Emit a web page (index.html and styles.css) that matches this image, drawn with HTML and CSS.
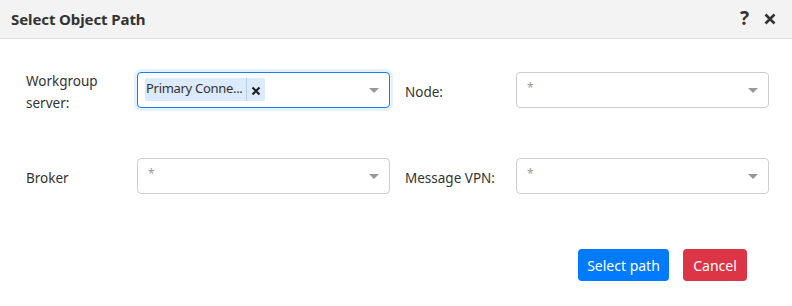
FILE: index.html
```html
<!DOCTYPE html>
<html>
<head>
<meta charset="utf-8">
<link rel="stylesheet" href="styles.css">
</head>
<body>
<div class="dialog">
  <div class="header">
    <div class="title">Select Object Path</div>
    <div class="tools">
      <span class="help">?</span>
      <svg class="close" width="12" height="12" viewBox="0 0 12 12"><path d="M1.5 1.5 L10.5 10.5 M10.5 1.5 L1.5 10.5" stroke="#333" stroke-width="2.6"/></svg>
    </div>
  </div>
  <div class="form">
    <div class="label">Workgroup server:</div>
    <div class="select focused">
      <div class="tag">
        <span class="tag-text">Primary Conne...</span>
        <span class="tag-remove"><svg width="10" height="10" viewBox="0 0 10 10"><path d="M1.5 1.5 L8.5 8.5 M8.5 1.5 L1.5 8.5" stroke="#222" stroke-width="2.2"/></svg></span>
      </div>
      <span class="arrow"></span>
    </div>
    <div class="label right">Node:</div>
    <div class="select"><span class="ph">*</span><span class="arrow"></span></div>
    <div class="label">Broker</div>
    <div class="select"><span class="ph">*</span><span class="arrow"></span></div>
    <div class="label right">Message VPN:</div>
    <div class="select"><span class="ph">*</span><span class="arrow"></span></div>
  </div>
  <div class="footer">
    <button class="btn primary">Select path</button>
    <button class="btn danger">Cancel</button>
  </div>
</div>
</body>
</html>
```
FILE: styles.css
```css
* { box-sizing: border-box; }
html, body { margin: 0; padding: 0; background: #fff; }
body { font-family: "Noto Sans", "Open Sans", sans-serif; color: #333; font-size: 13.5px; }
.dialog { width: 792px; height: 306px; background: #fff; }
.header {
  height: 39px;
  background: #f3f3f3;
  border-bottom: 1px solid #dedede;
  display: flex;
  align-items: center;
  justify-content: space-between;
  padding: 0 16px 0 11px;
}
.title { font-weight: 700; font-size: 15px; color: #333; letter-spacing: -0.1px; }
.tools { display: flex; align-items: center; gap: 15px; }
.help { font-weight: 700; font-size: 19px; color: #333; line-height: 1; margin-top: -1px; }
.close { display: block; }
.form {
  display: grid;
  grid-template-columns: 111px 253px 126px 253px;
  row-gap: 44px;
  padding: 27px 23px 0 26px;
  align-items: center;
}
.label { line-height: 22px; padding: 4px 10px 0 0; }
.label.right { padding-left: 15px; }
.select {
  height: 36px;
  border: 1px solid #cfcfcf;
  border-radius: 4px;
  display: flex;
  align-items: center;
  padding: 0 10px 0 7px;
  background: #fff;
}
.select.focused {
  border: 1px solid #1a7cf0;
  box-shadow: 0 0 0 3px rgba(0, 123, 255, 0.1);
}
.ph { color: #999; font-size: 12px; margin-left: 3px; margin-top: -6px; }
.arrow {
  margin-left: auto;
  width: 0; height: 0;
  border-left: 5px solid transparent;
  border-right: 5px solid transparent;
  border-top: 5px solid #999;
}
.tag {
  display: flex;
  align-items: stretch;
  height: 23px;
  background: #dbeafc;
  border-radius: 2px;
  margin-top: -1px;
}
.tag-text { padding: 0 3px 0 1px; font-size: 13px; line-height: 21px; white-space: nowrap; color: #333; letter-spacing: -0.3px; }
.tag-remove {
  border-left: 1px solid #b7cfe9;
  width: 19px;
  display: flex;
  align-items: center;
  justify-content: center;
}
.tag-remove svg { display: block; margin-top: 2px; }
.footer {
  display: flex;
  justify-content: flex-end;
  gap: 14px;
  padding: 55px 45px 0 0;
}
.btn {
  height: 32px;
  border: none;
  border-radius: 4px;
  color: #fff;
  font-family: inherit;
  font-size: 14px;
  padding: 0;
  white-space: nowrap;
  cursor: pointer;
}
.primary { background: #007bff; width: 91px; }
.danger { background: #dc3545; width: 64px; }
```
